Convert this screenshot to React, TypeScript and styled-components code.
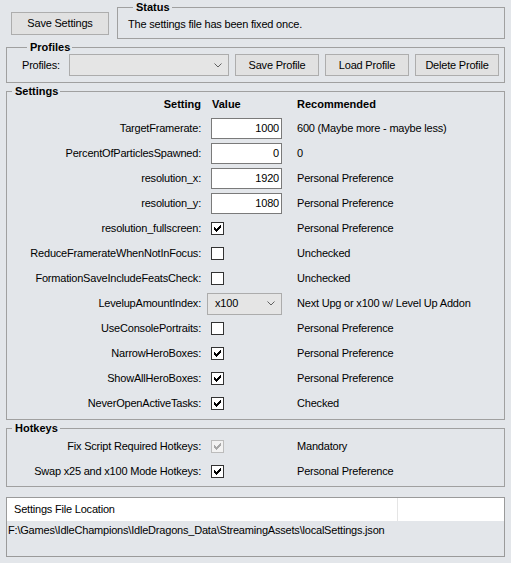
import React from "react";
import styled, { createGlobalStyle } from "styled-components";

const Global = createGlobalStyle`
  html, body { margin: 0; padding: 0; background: #e3e6ea; }
  body {
    font-family: "Liberation Sans", Arial, sans-serif;
    font-size: 11px;
    letter-spacing: -0.2px;
    color: #000;
  }
  * { box-sizing: border-box; }
`;

const Page = styled.div`
  width: 511px;
  height: 563px;
  padding: 2px 6px 0 6px;
  display: flex;
  flex-direction: column;
  background: #e3e6ea;
`;

const TopRow = styled.div`
  display: flex;
  align-items: flex-start;
`;

const Button = styled.button<{ $w: number; $h: number }>`
  width: ${(p) => p.$w}px;
  height: ${(p) => p.$h}px;
  flex: none;
  margin: 0;
  padding: 0;
  background: #e1e1e1;
  border: 1px solid #adadad;
  font: inherit;
  letter-spacing: inherit;
  color: #000;
  line-height: 1;
`;

const SaveButton = styled(Button)`
  margin: 10px 8px 0 5px;
`;

const Group = styled.fieldset<{ $mt: number; $pad: string; $grow?: boolean }>`
  margin: ${(p) => p.$mt}px 0 0 0;
  padding: ${(p) => p.$pad};
  border: 1px solid #a0a0a0;
  min-width: 0;
  flex: ${(p) => (p.$grow ? "1" : "none")};
`;

const Legend = styled.legend`
  font-weight: bold;
  line-height: 11px;
  letter-spacing: 0;
  padding: 0 2px 0 3px;
  margin-left: 5px;
`;

const StatusText = styled.div`
  line-height: 13px;
`;

const ProfilesRow = styled.div`
  display: flex;
  align-items: center;
  gap: 6px;
`;

const ProfilesLabel = styled.span`
  width: 41px;
  flex: none;
`;

const Combo = styled.div<{ $w: number; $h: number }>`
  width: ${(p) => p.$w}px;
  height: ${(p) => p.$h}px;
  flex: none;
  background: #e5e5e5;
  border: 1px solid #acacac;
  display: flex;
  align-items: center;
  justify-content: space-between;
  padding: 0 6px 0 7px;
`;

const Chevron = () => (
  <svg width="8" height="5" viewBox="0 0 8 5">
    <polyline points="0.5,0.5 4,4 7.5,0.5" fill="none" stroke="#606060" strokeWidth="1" />
  </svg>
);

const Row = styled.div<{ $h: number; $align?: string }>`
  display: grid;
  grid-template-columns: 194px 84px 1fr;
  column-gap: 6px;
  height: ${(p) => p.$h}px;
  align-items: ${(p) => p.$align || "center"};
  line-height: 13px;
`;

const Label = styled.span<{ $bold?: boolean }>`
  text-align: right;
  white-space: nowrap;
  font-weight: ${(p) => (p.$bold ? "bold" : "normal")};
  letter-spacing: ${(p) => (p.$bold ? "0" : "-0.2px")};
`;

const HeadCell = styled.span<{ $pl?: number }>`
  font-weight: bold;
  letter-spacing: 0;
  padding-left: ${(p) => p.$pl || 0}px;
  white-space: nowrap;
`;

const Rec = styled.span`
  white-space: nowrap;
`;

const ValueCell = styled.div`
  display: flex;
  align-items: center;
`;

const NumInput = styled.div`
  width: 71px;
  height: 21px;
  margin-left: 4px;
  background: #fff;
  border: 1px solid #7a7a7a;
  text-align: right;
  padding: 0 2px 0 0;
  line-height: 19px;
`;

const Box = styled.span<{ $disabled?: boolean }>`
  display: block;
  width: 13px;
  height: 13px;
  margin-left: 4px;
  background: ${(p) => (p.$disabled ? "#f2f2f2" : "#fff")};
  border: 1px solid ${(p) => (p.$disabled ? "#bcbcbc" : "#333")};
  svg { display: block; }
`;

const CHECK =
  "M8 2h1v1h-1z M7 3h2v1h-2z M2 4h1v1h-1z M6 4h3v1h-3z M2 5h2v1h-2z M5 5h3v1h-3z M2 6h5v1h-5z M3 7h3v1h-3z M4 8h1v1h-1z";

const CheckBox = ({ checked, disabled }: { checked?: boolean; disabled?: boolean }) => (
  <Box $disabled={disabled}>
    {checked && (
      <svg width="11" height="11" viewBox="0 0 11 11" shapeRendering="crispEdges">
        <path d={CHECK} fill={disabled ? "#a8a8a8" : "#000"} />
      </svg>
    )}
  </Box>
);

const ListPanel = styled.div`
  margin-top: 10px;
  height: 60px;
  flex: none;
  border: 1px solid #9a9a9a;
  display: flex;
  flex-direction: column;
`;

const ListHeader = styled.div`
  height: 23px;
  background: #fff;
  display: flex;
`;

const HeaderCol = styled.div<{ $w?: number }>`
  ${(p) => (p.$w ? `width: ${p.$w}px; flex: none; border-right: 1px solid #e5e5e5;` : "flex: 1;")}
  padding-left: 7px;
  line-height: 23px;
  white-space: nowrap;
`;

const ListItem = styled.div`
  padding: 3px 0 0 1px;
  line-height: 13px;
  white-space: nowrap;
`;

type Setting = {
  label: string;
  kind: "num" | "check" | "combo";
  value?: string;
  checked?: boolean;
  rec: string;
};

const settings: Setting[] = [
  { label: "TargetFramerate:", kind: "num", value: "1000", rec: "600 (Maybe more - maybe less)" },
  { label: "PercentOfParticlesSpawned:", kind: "num", value: "0", rec: "0" },
  { label: "resolution_x:", kind: "num", value: "1920", rec: "Personal Preference" },
  { label: "resolution_y:", kind: "num", value: "1080", rec: "Personal Preference" },
  { label: "resolution_fullscreen:", kind: "check", checked: true, rec: "Personal Preference" },
  { label: "ReduceFramerateWhenNotInFocus:", kind: "check", checked: false, rec: "Unchecked" },
  { label: "FormationSaveIncludeFeatsCheck:", kind: "check", checked: false, rec: "Unchecked" },
  { label: "LevelupAmountIndex:", kind: "combo", value: "x100", rec: "Next Upg or x100 w/ Level Up Addon" },
  { label: "UseConsolePortraits:", kind: "check", checked: false, rec: "Personal Preference" },
  { label: "NarrowHeroBoxes:", kind: "check", checked: true, rec: "Personal Preference" },
  { label: "ShowAllHeroBoxes:", kind: "check", checked: true, rec: "Personal Preference" },
  { label: "NeverOpenActiveTasks:", kind: "check", checked: true, rec: "Checked" },
];

const renderValue = (s: Setting) => {
  if (s.kind === "num") return <NumInput>{s.value}</NumInput>;
  if (s.kind === "combo")
    return (
      <Combo $w={75} $h={22}>
        <span>{s.value}</span>
        <Chevron />
      </Combo>
    );
  return <CheckBox checked={s.checked} />;
};

export default function App() {
  return (
    <>
      <Global />
      <Page>
        <TopRow>
          <SaveButton $w={98} $h={23}>Save Settings</SaveButton>
          <Group $mt={0} $pad="5px 0 7px 10px" $grow>
            <Legend>Status</Legend>
            <StatusText>The settings file has been fixed once.</StatusText>
          </Group>
        </TopRow>

        <Group $mt={3} $pad="1px 0 6px 15px">
          <Legend>Profiles</Legend>
          <ProfilesRow>
            <ProfilesLabel>Profiles:</ProfilesLabel>
            <Combo $w={160} $h={22}>
              <span />
              <Chevron />
            </Combo>
            <Button $w={84} $h={22}>Save Profile</Button>
            <Button $w={84} $h={22}>Load Profile</Button>
            <Button $w={84} $h={22}>Delete Profile</Button>
          </ProfilesRow>
        </Group>

        <Group $mt={3} $pad="1px 0 3px 0">
          <Legend>Settings</Legend>
          <Row $h={18} $align="start">
            <Label $bold>Setting</Label>
            <HeadCell $pl={5}>Value</HeadCell>
            <HeadCell>Recommended</HeadCell>
          </Row>
          {settings.map((s) => (
            <Row $h={25} key={s.label}>
              <Label>{s.label}</Label>
              <ValueCell>{renderValue(s)}</ValueCell>
              <Rec>{s.rec}</Rec>
            </Row>
          ))}
        </Group>

        <Group $mt={3} $pad="0 0 2px 0">
          <Legend>Hotkeys</Legend>
          <Row $h={25}>
            <Label>Fix Script Required Hotkeys:</Label>
            <ValueCell>
              <CheckBox checked disabled />
            </ValueCell>
            <Rec>Mandatory</Rec>
          </Row>
          <Row $h={25}>
            <Label>Swap x25 and x100 Mode Hotkeys:</Label>
            <ValueCell>
              <CheckBox checked />
            </ValueCell>
            <Rec>Personal Preference</Rec>
          </Row>
        </Group>

        <ListPanel>
          <ListHeader>
            <HeaderCol $w={391}>Settings File Location</HeaderCol>
            <HeaderCol />
          </ListHeader>
          <ListItem>F:\Games\IdleChampions\IdleDragons_Data\StreamingAssets\localSettings.json</ListItem>
        </ListPanel>
      </Page>
    </>
  );
}
